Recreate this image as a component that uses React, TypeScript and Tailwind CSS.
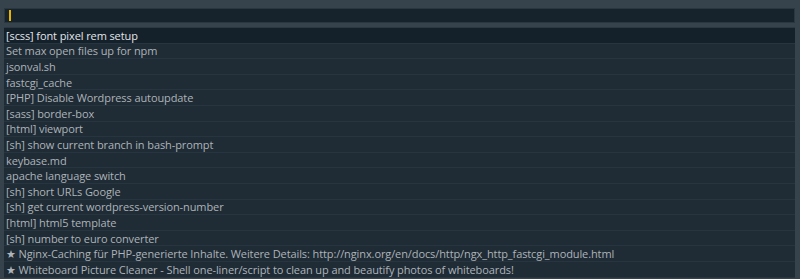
const items = [
  "[scss] font pixel rem setup",
  "Set max open files up for npm",
  "jsonval.sh",
  "fastcgi_cache",
  "[PHP] Disable Wordpress autoupdate",
  "[sass] border-box",
  "[html] viewport",
  "[sh] show current branch in bash-prompt",
  "keybase.md",
  "apache language switch",
  "[sh] short URLs Google",
  "[sh] get current wordpress-version-number",
  "[html] html5 template",
  "[sh] number to euro converter",
  "★ Nginx-Caching für PHP-generierte Inhalte. Weitere Details: http://nginx.org/en/docs/http/ngx_http_fastcgi_module.html",
  "★ Whiteboard Picture Cleaner - Shell one-liner/script to clean up and beautify photos of whiteboards!",
];

export default function App() {
  return (
    <div
      className="h-[279px] w-[800px] overflow-hidden bg-[#36424c] pl-[4px] pr-[5px] pt-[8px]"
      style={{ fontFamily: '"Open Sans", "DejaVu Sans", sans-serif' }}
    >
      <div className="flex h-[15px] items-center border border-[#2b3740] bg-[#17232c] pl-[4px]">
        <div className="h-[11px] w-[2px] bg-[#e8b400]" />
      </div>
      <div className="mt-[4px] border-t border-[#2c3942] bg-[#1f2b35]">
        {items.map((t, i) => (
          <div
            key={i}
            className={`flex h-[15.6px] items-center border-b border-[#273540] pl-[2px] text-[11px] leading-none tracking-[-0.1px] whitespace-nowrap ${
              i === 0 ? "bg-[#14202a] text-[#e2e6e9]" : "text-[#adb4b9]"
            }`}
          >
            {t}
          </div>
        ))}
      </div>
    </div>
  );
}
